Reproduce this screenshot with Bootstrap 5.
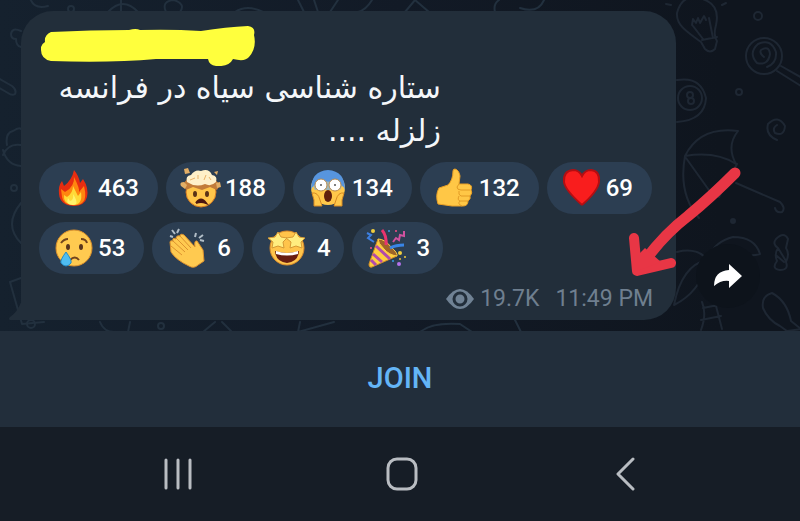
<!DOCTYPE html>
<html lang="en">
<head>
<meta charset="utf-8">
<meta name="viewport" content="width=device-width, initial-scale=1">
<title>Channel</title>
<link rel="stylesheet" href="https://cdn.jsdelivr.net/npm/bootstrap@5.3.0/dist/css/bootstrap.min.css">
<style>
body{background:#161d26;font-family:Roboto,"Noto Sans",sans-serif}
.chat{background:linear-gradient(90deg,#15212e 0,#121a26 50%,#0f151e 90%);padding:11px 40px 11px 21px;overflow:hidden}
.doodles{left:0;top:0;fill:none;stroke:#22303e;stroke-width:2;stroke-linecap:round;stroke-linejoin:round}
.bubble{background:#222e3a;border-radius:32px 32px 32px 0;padding:14px 18px 5px;width:655px;z-index:1}
.tail{left:-13px;bottom:0}
.scribble{margin-left:2px}
.message{font-family:"DejaVu Sans",sans-serif;font-size:30px;line-height:43px;color:#f4f7fa;width:402px}
.reactions{gap:8px;margin-top:10px}
.reaction{background:#2c3e52;color:#fff;border:0;height:52px;padding:0 19px 0 14px;font-size:24px;font-weight:500;gap:4px}
.reaction.single{padding-right:13px;gap:10px}
.reaction svg{width:41px;height:40px;flex:none}
.meta{color:#6f7f8f;font-size:23px;line-height:32px;margin-top:9px;padding-right:5px;gap:16px}
.views{gap:6px}
.share{width:64px;height:64px;background:#0d131b;border:0;margin-bottom:12px;z-index:1}
.arrow{left:620px;top:160px;z-index:2}
.join{background:#222e3b;color:#64b5f6;height:96px;border:0;font-size:29px;font-weight:500}
.sysbar{height:93px;padding:0 62px 0 66px}
.sysbar button{width:224px;background:none;border:0}
</style>
<script src="https://cdn.jsdelivr.net/npm/bootstrap@5.3.0/dist/js/bootstrap.bundle.min.js"></script>
</head>
<body>
<main class="chat position-relative d-flex align-items-end justify-content-between">
<svg class="doodles position-absolute" width="800" height="332" aria-hidden="true">
<path d="M30-2q4 12 18 8M21 31q-9-4-10 3 0 5 5 5 0 7 5 8M-2 78l14 8q5 4 3 8-3 2-7-1l-12-7M7 145q-2-12 6-14 6-4 8-2M3 155q5-12 18-10M3 150q4 15 18 16M21 203q-18 22 0 40M10 282l11-4M10 282l12 42 22-2M108 12q15-16 30 0M121 0v12M166 12q-5-11 8-12 12 4 6 12M235 12q12-8 28 0M298 0l6 12M314 0l4 12M330 12l8-12M372 0q-6 10-14 12M405 12l10-12 14 12M495 12q-2-8 4-12M520 8q18 6 24-8M100 322q4 10 14 10M130 322l-2 10M203 332l12-10M222 322l10 10M300 322l-2 10 36-10M420 332q12-10 40-8l12 8M515 320l6 12"/>
<circle cx="71" cy="9" r="3"/><circle cx="14" cy="188" r="3"/><circle cx="31" cy="324" r="4"/><circle cx="161" cy="326" r="3"/>
<g stroke="#1e2733">
<path d="M701 42C687 32 676 25 677 13q5-19 22-15 22 5 17 27-3 11 1 16l-2 8q-5 5-10 0zM702 40l15-3M693 26l10 13M709 18l4 20M692 25l1-6 3 4 2-5 2 5 4-7 2 4M666 4l5 1M722 5l4-2"/>
<circle cx="758" cy="16" r="4"/><circle cx="739" cy="92" r="3"/>
<circle cx="764" cy="56" r="18"/><path d="M764 57q-5-4-3-7 8-5 9 4-2 12-13 9-9-10 1-19 13-6 18 8 1 11-9 15M781 66l23 13M777 71l24 15"/>
<path d="M677 80q24-4 29 18-1 22-29 24"/><circle cx="690" cy="98" r="12"/><circle cx="690" cy="95" r="3"/><circle cx="691" cy="101" r="3"/>
<path d="M777 140q-12-5-9-16 10-10 17 2-1 11-10 7-3-5 2-8M685 156q15-30 53-25-12 15-2 33-20-13-51-8zM685 156q-7 38 14 62M686 158l25 35M737 164l-18 33M736 183l44 19q6 6 2 10-6 1-7-4"/>
<circle cx="733" cy="221" r="2" fill="#1e2733"/>
<path d="M677 252q20-5 31 8 5-18 25-23 22 0 27 17-10 3-19-1l-33 6M707 260q-25 5-33 45 25-12 35-44M702 302q5 12-1 28M716 306l6 23M703 308l15-3M701 320l20-4M776 239q8-8 12 0l-2 9q4 6 0 14 3 8-6 8-9-1-3-9-3-7 1-13-6-4-2-9zM778 248l8 13M777 256l7 6M763 308q-2-12 9-15 15 8 19 28l10 8-14 2-7-5q-12-6-17-18z"/>
</g>
</svg>
<article class="bubble position-relative d-flex flex-column">
<svg class="tail position-absolute" width="14" height="20" aria-hidden="true"><path d="M14 0v20H2q-2-1 0-3Q9 13 14 0" fill="#222e3a"/></svg>
<svg class="scribble" width="216" height="41" aria-hidden="true"><path d="M10 7 Q50 5 88 5 Q95 3 99 5 Q130 4 160 6 Q185 2 207 1 Q215 2 213 10 Q216 23 208 32 Q204 37 192 34 Q188 42 175 41 Q168 40 167 34 L115 34 Q70 38 10 36 Q0 34 0 25 Q-1 20 4 17 Q3 10 10 7Z" fill="#ffff3d"/></svg>
<p class="message mb-0" dir="rtl" lang="fa">ستاره شناسی سیاه در فرانسه<br>زلزله ....</p>
<div class="reactions d-flex flex-wrap">
<button class="reaction rounded-pill d-flex align-items-center" aria-label="Fire 463"><svg viewBox="0 0 41 40"><path d="M21 2q5 6 6 13l3-4q6 9 4 18-2 9-14 9Q7 37 6 26q-1-8 3-13l2 5Q19 12 21 2" fill="#e72d10"/><path d="M21 9q6 12 5 15l5-6q3 12-1 16-4 4-11 3-9-1-10-8l-1-8 4 3q10-5 9-17" fill="#ff860f"/><path d="M20 18l5 10 3-4q2 13-8 13-10-1-9-10l3 2q6-4 6-11" fill="#ffda38"/><path d="M20 26q7 11 0 11-8 0-5-7l2 3q4-1 3-7" fill="#fff36b"/></svg><span>463</span></button>
<button class="reaction rounded-pill d-flex align-items-center" aria-label="Mind blown 188"><svg viewBox="0 0 41 40"><circle cx="21" cy="24" r="15" fill="#ffc54a" stroke="#d47922"/><path d="M3 16l6-7 12-3 12 3 7 8-3 5-7-3-8 3-9-3-7 3z" fill="#c27b39"/><path d="M7 14q-2-6 4-7 4-6 10-4 8-3 11 4 6 1 4 7-5 5-11 2-9 4-18-2" fill="#fff0c9"/><path d="M10 12l5-2M18 11V7M24 12l2-5M31 12l-2-3" stroke="#eab36a"/><path d="M1 18q-2-4 3-4l3 3-2 4zM36 15l4-1 1 5-4 1zM4 1l4-1 2 5-5 1zM34 4l4-1-1 4z" fill="#e2ae66"/><ellipse cx="15" cy="26" rx="2" ry="3" fill="#5a3116"/><ellipse cx="27" cy="26" rx="2" ry="3" fill="#5a3116"/><path d="M16 35q5-7 10 0-5-2-10 0" fill="#4c1710" stroke="#4c1710" stroke-width="2"/></svg><span>188</span></button>
<button class="reaction rounded-pill d-flex align-items-center" aria-label="Scream 134"><svg viewBox="0 0 41 40"><circle cx="21" cy="20" r="17" fill="#ffc84a"/><path d="M4 22Q4 3 21 2q17 1 17 20-3-8-17-8T4 22" fill="#5795de"/><path d="M6 18q13-9 29 0l-2 4H8" fill="#9fb7ba"/><circle cx="14" cy="17" r="6" fill="#fff" stroke="#b98a4b"/><circle cx="28" cy="17" r="6" fill="#fff" stroke="#b98a4b"/><circle cx="14" cy="17" r="1" fill="#555"/><circle cx="28" cy="17" r="1" fill="#555"/><ellipse cx="21" cy="28" rx="4" ry="6" fill="#61200c"/><path d="M5 25q6-1 8 7l2 6H7V32zM37 25q-6-1-8 7l-2 6h8v-6z" fill="#ffc84a" stroke="#d78a23"/></svg><span>134</span></button>
<button class="reaction rounded-pill d-flex align-items-center" aria-label="Thumbs up 132"><svg viewBox="0 0 41 40"><path d="M21 1q4 1 5 7l-1 8h9q5 1 3 6 2 3-1 6 1 3-2 5 0 5-5 5H18L4 36q-3-9 1-16l9-3q5-5 5-14 0-2 2-2" fill="#ffc746" stroke="#e99f25"/><path d="M36 22h-9q-4 0-4-3l2-3M36 28h-9q-3-1-2-5M34 33h-8q-3-1-1-5M26 33q-3 3 2 5" fill="none" stroke="#e29b25" stroke-width="1"/></svg><span>132</span></button>
<button class="reaction rounded-pill d-flex align-items-center" aria-label="Heart 69"><svg viewBox="0 0 41 40"><path d="M21 37Q4 22 3 14 2 3 12 2q6 0 9 6 3-6 9-6 9 1 8 12-1 9-17 23" fill="#f91d1d" stroke="#b30e12" stroke-width="2"/></svg><span>69</span></button>
<button class="reaction rounded-pill d-flex align-items-center" aria-label="Crying 53"><svg viewBox="0 0 41 40"><circle cx="21" cy="20" r="18" fill="#ffca50" stroke="#d98e2b"/><ellipse cx="15" cy="19" rx="2" ry="3" fill="#59351c"/><ellipse cx="28" cy="19" rx="2" ry="3" fill="#59351c"/><path d="M8 15q3-4 7-4M28 11q5 0 6 4M17 32q5-5 9 0" fill="none" stroke="#71441d" stroke-width="2"/><path d="M13 24q6 8 5 11-5 6-10 0-1-3 5-11" fill="#4fbdf1" stroke="#278bc3"/></svg><span>53</span></button>
<button class="reaction single rounded-pill d-flex align-items-center" aria-label="Clap 6"><svg viewBox="0 0 41 40"><path d="M4 14l1 10q5 8 18 14 5 3 9-1l6-4-1-11-6-9q-3-1-2 6L18 7q-4-2-4 1-4-1-4 3-4-2-3 2-3-1-3 1" fill="#ffca50" stroke="#dd922e"/><path d="M7 13l12 11M10 10l12 12M14 8l11 12M5 18l11 9" stroke="#dc922f"/><path d="M4 8l3 1M6 2l3 4M13 1l-2 4M30 5l-1 4M37 7l-4 3M38 13l-4-1" stroke="#b1bdc7" stroke-width="2"/></svg><span>6</span></button>
<button class="reaction single rounded-pill d-flex align-items-center" aria-label="Star-struck 4"><svg viewBox="0 0 41 40"><circle cx="21" cy="20" r="17" fill="#ffc44b" stroke="#db8b2b"/><path d="M9 23q12 4 24 0-1 11-12 12Q10 34 9 23" fill="#681d10"/><path d="M10 23q11 4 22 0v3q-11 3-22 0" fill="#fff"/><path id="star" d="M12 4l3 5 6 1-4 4 1 6-6-2-6 2 1-6-5-4 7-1z" fill="#ffed80" stroke="#d59a35"/><use href="#star" x="18"/></svg><span>4</span></button>
<button class="reaction single rounded-pill d-flex align-items-center" aria-label="Party 3"><svg viewBox="0 0 41 40"><path d="M12 11l19 17-25 11q-3 1-3-3z" fill="#ffce3e" stroke="#d18c26"/><path d="M10 18l14 13M7 26l9 8M5 32l5 5" stroke="#b24baa" stroke-width="3"/><path d="M12 11q7 0 13 8 7 6 6 9-8-1-13-7-6-6-6-10" fill="#9e6428" stroke="#ffcd45" stroke-width="1"/><path d="M24 20q6-3 14-3" fill="none" stroke="#3985e6" stroke-width="3"/><path d="M20 17Q21 8 16 2" fill="none" stroke="#e8346e" stroke-width="3"/><path d="M27 14l3-4 3 2 1-5 4 1V3" fill="none" stroke="#d0529f" stroke-width="2"/><path d="M1 5l4 2-3 3 6 4" fill="none" stroke="#3d7fe0" stroke-width="2"/><g fill="#f1ce3f"><circle cx="7" cy="3" r="2"/><circle cx="34" cy="25" r="2"/><circle cx="39" cy="29" r="1"/></g><g fill="#f64d87"><circle cx="30" cy="3" r="1"/><circle cx="5" cy="20" r="1"/></g><circle cx="33" cy="36" r="2" fill="#b472ed"/><circle cx="34" cy="31" r="1" fill="#e9b93c"/><circle cx="23" cy="3" r="1" fill="#379ce8"/><circle cx="27" cy="33" r="1" fill="#379ce8"/></svg><span>3</span></button>
</div>
<div class="meta d-flex justify-content-end"><span class="views d-flex align-items-center"><svg width="28" height="20" aria-label="Views"><path d="M0 10Q7 0 14 0t14 10Q21 20 14 20T0 10" fill="#708294"/><circle cx="14" cy="10" r="6" fill="none" stroke="#222e3a" stroke-width="3"/></svg>19.7K</span><time>11:49 PM</time></div>
</article>
<button class="share rounded-circle d-flex align-items-center justify-content-center p-0" aria-label="Share"><svg width="30" height="26"><path d="M16 1l13 12-13 12v-7Q8 17 1 23 1 8 16 7z" fill="#fff"/></svg></button>
<svg class="arrow position-absolute" width="125" height="120" aria-hidden="true"><g fill="none" stroke="#e83645" stroke-linecap="round" stroke-linejoin="round"><path d="M115 13Q90 38 68 56 42 76 21 106" stroke-width="11"/><path d="M14 78l3 33 34-8" stroke-width="10"/></g><path d="M17 96l8-8 16 14-24 9z" fill="#e83645"/></svg>
</main>
<button class="join d-flex w-100 align-items-center justify-content-center p-0">JOIN</button>
<nav class="sysbar d-flex align-items-center justify-content-between" aria-label="System navigation">
<button aria-label="Recent apps"><svg width="30" height="34"><path d="M3 3v28M15 3v28M27 3v28" stroke="#b9bdc2" stroke-width="3" stroke-linecap="round"/></svg></button>
<button aria-label="Home"><svg width="32" height="34"><rect x="2" y="2" width="28" height="30" rx="9" fill="none" stroke="#b9bdc2" stroke-width="3"/></svg></button>
<button aria-label="Back"><svg width="20" height="34"><path d="M17 2L2 17l15 15" fill="none" stroke="#b9bdc2" stroke-width="3" stroke-linecap="round" stroke-linejoin="round"/></svg></button>
</nav>
</body>
</html>
